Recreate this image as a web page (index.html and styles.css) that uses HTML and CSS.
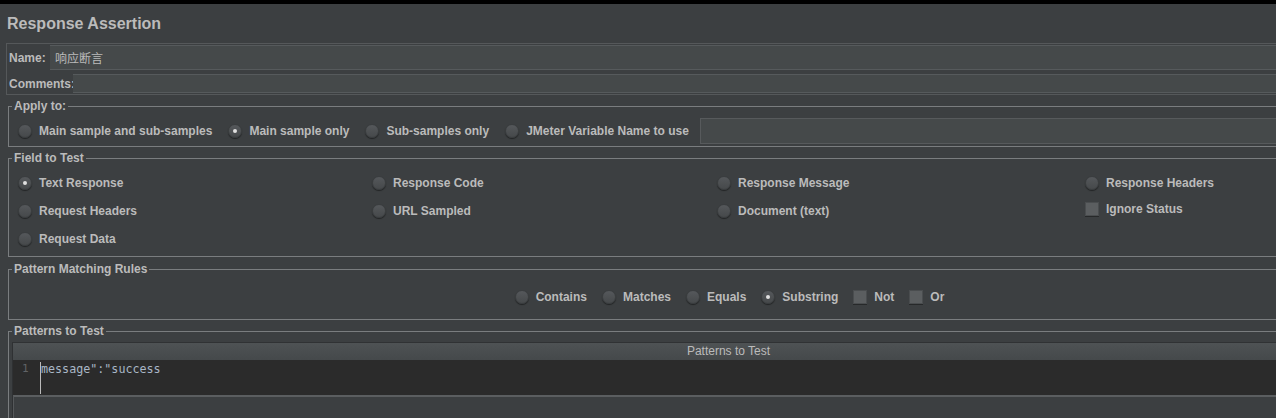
FILE: index.html
```html
<!DOCTYPE html>
<html>
<head>
<meta charset="utf-8">
<link rel="stylesheet" href="styles.css">
</head>
<body>
<div class="topbar"></div>
<div class="page">
  <div class="title">Response Assertion</div>

  <div class="namebox">
    <div class="nrow nrow-name">
      <span class="lbl lbl-name">Name:</span>
      <div class="field field-name">响应断言</div>
    </div>
    <div class="nrow nrow-comments">
      <span class="lbl lbl-comments">Comments:</span>
      <div class="field"></div>
    </div>
  </div>

  <fieldset class="group group-apply">
    <legend>Apply to:</legend>
    <div class="hrow">
      <span class="opt"><span class="radio"></span>Main sample and sub-samples</span>
      <span class="opt"><span class="radio on"></span>Main sample only</span>
      <span class="opt"><span class="radio"></span>Sub-samples only</span>
      <span class="opt opt-last"><span class="radio"></span>JMeter Variable Name to use</span>
      <div class="field field-var"></div>
    </div>
  </fieldset>

  <fieldset class="group group-field">
    <legend>Field to Test</legend>
    <div class="grid">
      <span class="opt"><span class="radio on"></span>Text Response</span>
      <span class="opt"><span class="radio"></span>Response Code</span>
      <span class="opt"><span class="radio"></span>Response Message</span>
      <span class="opt"><span class="radio"></span>Response Headers</span>
      <span class="opt"><span class="radio"></span>Request Headers</span>
      <span class="opt"><span class="radio"></span>URL Sampled</span>
      <span class="opt"><span class="radio"></span>Document (text)</span>
      <span class="opt opt-ignore"><span class="check"></span>Ignore Status</span>
      <span class="opt"><span class="radio"></span>Request Data</span>
    </div>
  </fieldset>

  <fieldset class="group group-rules">
    <legend>Pattern Matching Rules</legend>
    <div class="prow">
      <span class="opt"><span class="radio"></span>Contains</span>
      <span class="opt"><span class="radio"></span>Matches</span>
      <span class="opt"><span class="radio"></span>Equals</span>
      <span class="opt"><span class="radio on"></span>Substring</span>
      <span class="opt"><span class="check"></span>Not</span>
      <span class="opt opt-last"><span class="check"></span>Or</span>
    </div>
  </fieldset>

  <fieldset class="group group-patterns">
    <legend>Patterns to Test</legend>
    <div class="table">
      <div class="thead">Patterns to Test</div>
      <div class="editor">
        <div class="gutter">1</div>
        <div class="code">message":"success</div>
      </div>
      <div class="tfoot"></div>
    </div>
  </fieldset>
</div>
</body>
</html>
```

FILE: styles.css
```css
* {
  box-sizing: border-box;
}

html, body {
  margin: 0;
  padding: 0;
}

body {
  width: 1276px;
  height: 418px;
  overflow: hidden;
  background: #3c3f41;
  color: #bbbbbb;
  font-family: "Liberation Sans", Arial, sans-serif;
  font-size: 12px;
  font-weight: bold;
}

.topbar {
  height: 4px;
  background: #000000;
}

.page {
  width: 1456px;
  padding: 0 6px;
}

.title {
  height: 39px;
  line-height: 40px;
  font-size: 16px;
  padding-left: 1px;
  color: #bbbbbb;
}

/* Name / Comments */
.namebox {
  border: 1px solid #55585a;
  padding: 1px 0 1px 2px;
  height: 52px;
}

.nrow {
  display: flex;
  align-items: center;
}

.nrow-name {
  height: 25px;
}

.nrow-comments {
  height: 19px;
  margin-top: 4px;
}

.lbl-name {
  width: 41px;
}

.lbl-comments {
  width: 64px;
}

.field {
  flex: 1;
  height: 100%;
  background: #45494a;
  border-top: 1px solid #565a5c;
  border-bottom: 1px solid #565a5c;
}

.field-name {
  display: flex;
  align-items: center;
  padding-left: 5px;
  font-weight: normal;
  font-family: "Noto Sans CJK SC", "Liberation Sans", sans-serif;
  font-size: 12px;
  color: #bbbbbb;
}

/* Titled groups */
.group {
  margin: 0 2px;
  padding: 0 0 0 3px;
  border: 1px solid #7a7d7f;
  min-width: 0;
}

.group legend {
  padding: 0 2px;
  font-size: 12px;
  line-height: 14px;
  font-weight: bold;
  color: #bbbbbb;
}

.group-apply {
  margin-top: 4px;
  padding-top: 5px;
  padding-bottom: 2px;
}

.group-field {
  margin-top: 4px;
  padding-top: 4px;
  padding-bottom: 3px;
}

.group-rules {
  margin-top: 5px;
  padding-top: 7px;
  padding-bottom: 8px;
}

.group-patterns {
  margin-top: 4px;
  padding-top: 4px;
  padding-right: 3px;
  height: 200px;
}

/* Options */
.opt {
  display: inline-flex;
  align-items: center;
  white-space: nowrap;
}

.radio {
  display: inline-flex;
  align-items: center;
  justify-content: center;
  width: 14px;
  height: 14px;
  margin-right: 7px;
  border-radius: 50%;
  background: linear-gradient(#55585b, #46494b);
  border: 1px solid #3a3d3f;
  box-shadow: 0 1px 1px rgba(0, 0, 0, 0.45);
  flex: none;
}

.radio.on::after {
  content: "";
  width: 4px;
  height: 4px;
  border-radius: 50%;
  background: #e0e0e0;
}

.check {
  display: inline-block;
  width: 14px;
  height: 14px;
  margin-right: 7px;
  background: #5b5e60;
  border: 1px solid #4a4d4f;
  box-shadow: 0 1px 0 rgba(0, 0, 0, 0.35);
  flex: none;
}

/* Apply row */
.hrow {
  display: flex;
  align-items: center;
  height: 26px;
  padding-left: 6px;
}

.hrow .opt {
  margin-right: 16px;
}

.hrow .opt-last {
  margin-right: 11px;
}

.field-var {
  border: 1px solid #575a5c;
  border-right: none;
}

/* Field to test grid */
.grid {
  display: grid;
  grid-template-columns: 354px 345px 368px 1fr;
  grid-auto-rows: 28px;
  padding-left: 6px;
  align-items: center;
}

.opt-ignore {
  margin-bottom: 4px;
}

/* Pattern rules */
.prow {
  display: flex;
  justify-content: center;
  align-items: center;
  height: 28px;
}

.prow .opt {
  margin-right: 15px;
}

.prow .opt-last {
  margin-right: 0;
}

/* Patterns table */
.table {
  border-left: 1px solid #2f3133;
}

.thead {
  height: 18px;
  border-top: 1px solid #303234;
  background: linear-gradient(#4e5254, #45494b);
  text-align: center;
  font-weight: normal;
  line-height: 17px;
  color: #bbbbbb;
}

.editor {
  display: flex;
  height: 35px;
  padding: 2px 0 1px;
  background: #2b2b2b;
  font-family: "DejaVu Sans Mono", monospace;
  font-size: 11.7px;
  font-weight: normal;
  line-height: 14px;
}

.gutter {
  width: 28px;
  padding-left: 9px;
  border-right: 1px solid #bbbbbb;
  color: #606366;
  font-size: 11px;
}

.code {
  color: #a9b7c6;
}

.tfoot {
  height: 40px;
  border-top: 2px solid #5b5e60;
  border-left: 1px solid #55585a;
}
```
